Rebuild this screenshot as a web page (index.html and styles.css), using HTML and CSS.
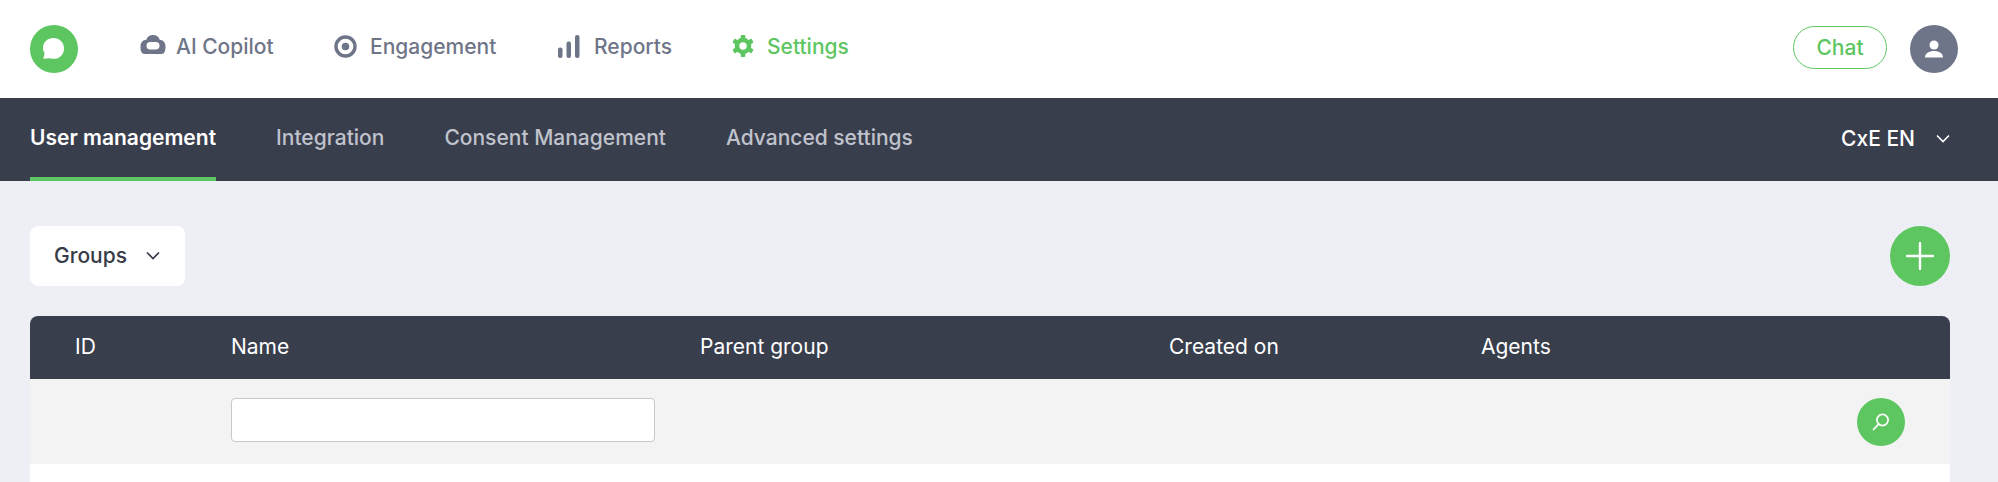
FILE: index.html
```html
<!DOCTYPE html>
<html lang="en">
<head>
<meta charset="utf-8">
<title>User management</title>
<link rel="stylesheet" href="styles.css">
</head>
<body>
<header class="topbar">
  <a class="logo" href="#" aria-label="Home">
    <svg viewBox="0 0 48 48" width="48" height="48"><circle cx="24" cy="24" r="24" fill="#5ec661"/><path d="M23.500 13C17.700 13 13 17.200 13 22.800c0 2 .6 3.800 1.600 5.300L13.300 33.800l6.100-.6c1.200.4 2.600.6 4.100.6 6 0 10.500-4.300 10.500-10.400S29.500 13 23.500 13z" fill="#fff"/></svg>
  </a>
  <nav class="mainnav">
    <a class="mainitem item-ai" href="#">
      <svg class="ico" width="26" height="22" viewBox="0 0 26 22"><path d="M13 0c3.500 0 5.900 2 6.700 4.800 3 .3 5.800 2.300 5.800 6.400 0 1.700-.1 3.600-.5 4.800-.6 1.900-1.800 3-3.600 3H4.600c-1.800 0-3-1.100-3.600-3-.4-1.200-.5-3.100-.5-4.800 0-4.100 2.800-6.100 5.800-6.400C7.100 2 9.500 0 13 0z" fill="#6f7588"/><rect x="6.500" y="7" width="13" height="7.500" rx="3.750" fill="#fff"/></svg>
      <span>AI Copilot</span>
    </a>
    <a class="mainitem item-eng" href="#">
      <svg class="ico" width="23" height="23" viewBox="0 0 23 23"><circle cx="11.500" cy="11.500" r="9.500" fill="none" stroke="#6f7588" stroke-width="3.400"/><circle cx="11.500" cy="11.500" r="3.800" fill="#6f7588"/></svg>
      <span>Engagement</span>
    </a>
    <a class="mainitem item-rep" href="#">
      <svg class="ico" width="22" height="23" viewBox="0 0 22 23"><rect x="0" y="12.500" width="4.500" height="10.500" rx="2" fill="#6f7588"/><rect x="8.500" y="6.500" width="4.500" height="16.500" rx="2" fill="#6f7588"/><rect x="17" y="0" width="4.500" height="23" rx="2" fill="#6f7588"/></svg>
      <span>Reports</span>
    </a>
    <a class="mainitem item-set active" href="#">
      <svg class="ico" width="22" height="22" viewBox="0 0 22 22"><circle cx="11" cy="11" r="6" fill="none" stroke="#5ec661" stroke-width="4.600"/><g fill="#5ec661"><rect x="8.700" y="0" width="4.600" height="4.500" rx="1"/><rect x="8.700" y="17.500" width="4.600" height="4.500" rx="1"/><rect x="8.700" y="0" width="4.600" height="4.500" rx="1" transform="rotate(60 11 11)"/><rect x="8.700" y="0" width="4.600" height="4.500" rx="1" transform="rotate(120 11 11)"/><rect x="8.700" y="0" width="4.600" height="4.500" rx="1" transform="rotate(240 11 11)"/><rect x="8.700" y="0" width="4.600" height="4.500" rx="1" transform="rotate(300 11 11)"/></g></svg>
      <span>Settings</span>
    </a>
  </nav>
  <div class="topright">
    <button class="chat" type="button">Chat</button>
    <button class="avatar" type="button" aria-label="Account">
      <svg width="18" height="18" viewBox="0 0 18 18"><circle cx="9" cy="5" r="4.500" fill="#fff"/><path d="M0 17.500c0-4.200 4-6.500 9-6.500s9 2.300 9 6.500z" fill="#fff"/></svg>
    </button>
  </div>
</header>

<nav class="subnav">
  <a class="subitem current" href="#">User management</a>
  <a class="subitem" href="#">Integration</a>
  <a class="subitem" href="#">Consent Management</a>
  <a class="subitem" href="#">Advanced settings</a>
  <div class="account">
    <span>CxE EN</span>
    <svg width="14" height="9" viewBox="0 0 14 9"><path d="M1 1.500l6 6 6-6" fill="none" stroke="#fff" stroke-width="1.600"/></svg>
  </div>
</nav>

<main class="content">
  <div class="toolbar">
    <button class="select" type="button">
      <span>Groups</span>
      <svg width="14" height="9" viewBox="0 0 14 9"><path d="M1 1.500l6 6 6-6" fill="none" stroke="#373b47" stroke-width="1.700"/></svg>
    </button>
    <button class="add" type="button" aria-label="Add">
      <svg width="28" height="28" viewBox="0 0 28 28"><path d="M14 1v26M1 14h26" stroke="#fff" stroke-width="2.400" stroke-linecap="round"/></svg>
    </button>
  </div>
  <section class="table">
    <div class="row head">
      <div class="cell">ID</div>
      <div class="cell">Name</div>
      <div class="cell">Parent group</div>
      <div class="cell">Created on</div>
      <div class="cell">Agents</div>
    </div>
    <div class="row filters">
      <div class="cell"></div>
      <div class="cell"><input class="field" type="text" aria-label="Name"></div>
      <div class="cell"></div>
      <div class="cell"></div>
      <div class="cell action">
        <button class="search" type="button" aria-label="Search">
          <svg width="18" height="18" viewBox="0 0 18 18"><circle cx="10.500" cy="7" r="5.600" fill="none" stroke="#fff" stroke-width="1.700"/><path d="M6.600 11.200L1.500 16.500" stroke="#fff" stroke-width="1.700" stroke-linecap="round"/></svg>
        </button>
      </div>
    </div>
    <div class="body"></div>
  </section>
</main>
</body>
</html>
```
FILE: styles.css
```css
* { box-sizing: border-box; }
html, body { margin: 0; height: 100%; overflow: hidden; }
body {
  background: #eeeff4;
  font-family: "Inter", "Liberation Sans", sans-serif;
  color: #373b47;
}
a { text-decoration: none; color: inherit; }
button { font: inherit; border: 0; padding: 0; cursor: pointer; }

.topbar {
  height: 98px;
  background: #fff;
  display: flex;
  align-items: center;
  padding: 0 40px 0 30px;
}
.logo { display: flex; width: 48px; height: 48px; }
.mainnav { display: flex; align-items: center; margin-left: 62px; height: 46px; margin-top: -6px; }
.mainitem {
  display: flex;
  align-items: center;
  font-size: 21px;
  font-weight: 500;
  color: #6f7588;
  white-space: nowrap;
}
.ico { flex: none; }
.item-ai { width: 194px; gap: 10px; }
.item-eng { width: 224px; gap: 13px; }
.item-rep { width: 174px; gap: 14px; }
.item-set { gap: 13px; }
.mainitem.active { color: #5ec661; }

.topright { margin-left: auto; display: flex; align-items: center; gap: 23px; }
.chat {
  width: 94px;
  height: 43px;
  margin-bottom: 3px;
  border: 1px solid #5ec661;
  border-radius: 22px;
  background: #fff;
  color: #5ec661;
  font-size: 21px;
  font-weight: 500;
}
.avatar {
  width: 48px;
  height: 48px;
  border-radius: 50%;
  background: #6f7588;
  display: flex;
  align-items: center;
  justify-content: center;
}

.subnav {
  height: 83px;
  background: #393e4d;
  display: flex;
  padding: 0 48px 0 30px;
  gap: 60px;
  font-size: 21px;
}
.subitem {
  display: flex;
  align-items: center;
  padding-bottom: 1px;
  color: #c0c3cc;
  font-weight: 500;
  white-space: nowrap;
  border-bottom: 4px solid transparent;
}
.subitem.current { color: #fff; font-weight: 600; border-bottom-color: #5ec661; }
.account {
  margin-left: auto;
  display: flex;
  align-items: center;
  gap: 21px;
  color: #fff;
  font-weight: 500;
  padding-bottom: 3px;
}

.content { padding: 45px 48px 0 30px; }
.toolbar { display: flex; justify-content: space-between; align-items: center; height: 60px; }
.select {
  width: 155px;
  height: 60px;
  border-radius: 8px;
  background: #fff;
  color: #373b47;
  font-size: 21px;
  font-weight: 500;
  display: flex;
  align-items: center;
  padding: 0 0 2px 24px;
  gap: 19px;
}
.add {
  width: 60px;
  height: 60px;
  border-radius: 50%;
  background: #5ec661;
  display: flex;
  align-items: center;
  justify-content: center;
}

.table { margin-top: 30px; background: #fff; border-radius: 8px 8px 0 0; overflow: hidden; }
.row {
  display: grid;
  grid-template-columns: 201px 469px 469px 312px 1fr;
  align-items: center;
}
.head { height: 63px; background: #393e4d; color: #fff; font-size: 21px; font-weight: 400; padding-bottom: 3px; }
.head .cell:first-child { padding-left: 45px; }
.filters { height: 85px; background: #f3f3f4; align-items: start; padding-top: 19px; }
.body { height: 40px; }
.field {
  display: block;
  width: 424px;
  height: 44px;
  background: #fff;
  border: 1px solid #c8c8d0;
  border-radius: 4px;
}
.action { display: flex; justify-content: flex-end; padding-right: 45px; }
.search {
  width: 48px;
  height: 48px;
  border-radius: 50%;
  background: #5ec661;
  display: flex;
  align-items: center;
  justify-content: center;
}
```
